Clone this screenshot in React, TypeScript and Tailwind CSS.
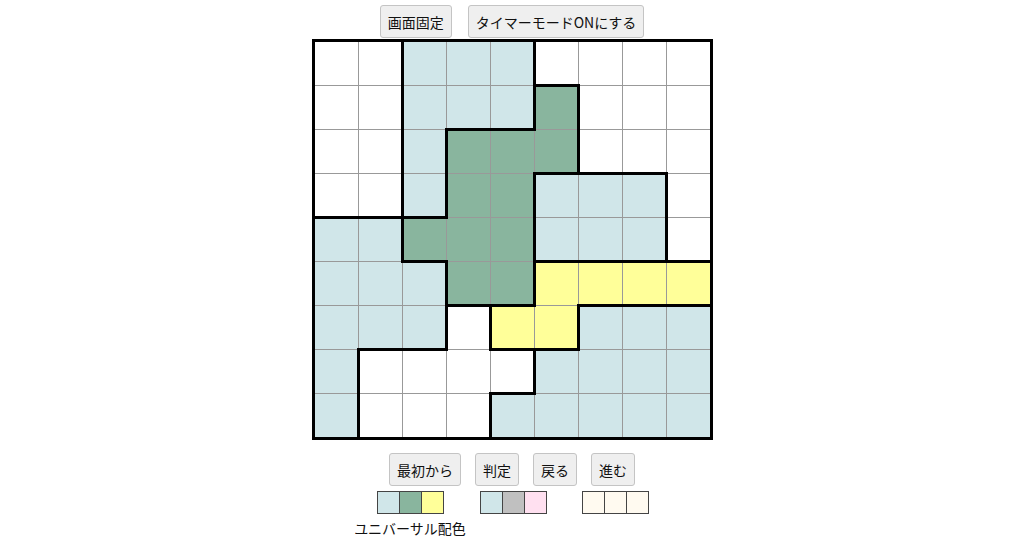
import React from 'react';

// W = white, L = light blue, G = green, Y = yellow
const board: string[] = [
  'WWLLLWWWW',
  'WWLLLGWWW',
  'WWLGGGWWW',
  'WWLGGLLLW',
  'LLGGGLLLW',
  'LLLGGYYYY',
  'LLLWYYLLL',
  'LWWWWLLLL',
  'LWWWLLLLL',
];

const cellBg: Record<string, string> = {
  W: 'bg-white',
  L: 'bg-[#d0e6e9]',
  G: 'bg-[#89b59e]',
  Y: 'bg-[#ffff99]',
};

const Btn: React.FC<{ children: React.ReactNode }> = ({ children }) => (
  <button
    type="button"
    className="h-[33px] px-[7px] bg-[#efefef] border border-[#c4c4c4] rounded-[3px] text-[14px] text-[#111] leading-none"
  >
    {children}
  </button>
);

const Swatches: React.FC<{ colors: string[] }> = ({ colors }) => (
  <div className="flex">
    {colors.map((c, i) => (
      <div
        key={i}
        className={`w-[23px] h-[23px] border border-[#444] ${i > 0 ? '-ml-px' : ''} ${c}`}
      />
    ))}
  </div>
);

const App: React.FC = () => {
  return (
    <div
      className="w-full h-[538px] bg-white flex flex-col items-center overflow-hidden"
      style={{ fontFamily: '"Noto Sans CJK JP", "Noto Sans", sans-serif' }}
    >
      {/* Top controls */}
      <div className="flex gap-4 mt-[5px]">
        <Btn>画面固定</Btn>
        <Btn>タイマーモードONにする</Btn>
      </div>

      {/* Board */}
      <div className="mt-[1px] border-[3px] border-black">
        <div className="grid grid-cols-[repeat(9,43px)] grid-rows-[repeat(9,43px)] gap-px bg-[#999]">
          {board.map((row, r) =>
            row.split('').map((c, col) => {
              const right = col < 8 && row[col + 1] !== c;
              const bottom = r < 8 && board[r + 1][col] !== c;
              return (
                <div key={`${r}-${col}`} className={`relative ${cellBg[c]}`}>
                  {right && (
                    <span className="absolute top-[-2px] bottom-[-2px] right-[-2px] w-[3px] bg-black z-10" />
                  )}
                  {bottom && (
                    <span className="absolute left-[-2px] right-[-2px] bottom-[-2px] h-[3px] bg-black z-10" />
                  )}
                </div>
              );
            })
          )}
        </div>
      </div>

      {/* Bottom controls */}
      <div className="flex gap-[14px] mt-[13px]">
        <Btn>最初から</Btn>
        <Btn>判定</Btn>
        <Btn>戻る</Btn>
        <Btn>進む</Btn>
      </div>

      {/* Colour palettes */}
      <div className="flex items-start mt-[5px] pr-[22px]">
        <div className="flex flex-col items-center w-[113px]">
          <Swatches colors={['bg-[#d0e6e9]', 'bg-[#89b59e]', 'bg-[#ffff99]']} />
          <span className="mt-[7px] text-[14px] leading-none text-[#111]">ユニバーサル配色</span>
        </div>
        <div className="ml-[13px]">
          <Swatches colors={['bg-[#d0e6e9]', 'bg-[#c0c0c0]', 'bg-[#ffe0f0]']} />
        </div>
        <div className="ml-[35px]">
          <Swatches colors={['bg-[#fffaf0]', 'bg-[#fffaf0]', 'bg-[#fffaf0]']} />
        </div>
      </div>
    </div>
  );
};

export default App;
